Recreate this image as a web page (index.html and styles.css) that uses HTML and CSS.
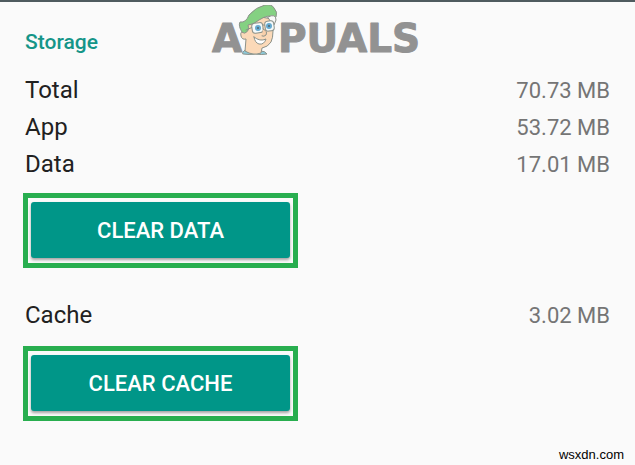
FILE: index.html
```html
<!DOCTYPE html>
<html lang="en">
<head>
    <meta charset="UTF-8">
    <meta name="viewport" content="width=device-width, initial-scale=1.0">
    <title>Storage</title>
    <link rel="stylesheet" href="styles.css">
</head>
<body>
    <svg class="logo" width="210" height="56" viewBox="0 0 210 56" role="img" aria-label="Appuals">
        <text class="logo-text" x="1" y="47">A</text>
        <text class="logo-text" x="67" y="47">PUALS</text>
        <g stroke="#8b9189" stroke-width="1" stroke-linejoin="round" stroke-linecap="round">
            <path fill="#8bcbdc" d="M32 47 Q35 43 38 44 L50 46 Q54 46 56 49 Q50 50 45 49 Q38 50 32 49Z"/>
            <path fill="#fbd9b8" d="M32 27 Q29 26 30 31 Q31 35 35 34 L34 46 Q42 51 50 48 L51 43 Q57 42 60 37 Q62 33 62 26 L61 14 L50 12 L37 19Z"/>
            <path fill="#84d182" d="M31 27 Q27 21 29 17 Q35 18 38 10 Q45 2 54 0 Q61 -1 63 3 Q67 7 65 12 Q57 9 48 15 Q42 20 37 20 Q39 26 34 28Z"/>
            <path fill="#fafafa" d="M57 12 Q65 8 65 15 L63 20 L60 17Z"/>
            <path fill="none" d="M35 25 L42 22 M51 20 L54 20"/>
            <rect x="41" y="18" width="11" height="10" rx="3" fill="#f5fafa" transform="rotate(-8 46 23)"/>
            <rect x="54" y="16" width="9" height="10" rx="3" fill="#f5fafa" transform="rotate(-8 58 21)"/>
            <path fill="#f8cfaa" d="M52 24 Q57 26 55 30 Q53 32 51 31"/>
            <path fill="#ffffff" d="M43 32 Q49 37 55 34 Q53 40 48 39 Q44 38 43 32Z"/>
        </g>
        <circle cx="47" cy="23" r="3" fill="#67abd0"/>
        <circle cx="58" cy="21" r="3" fill="#67abd0"/>
        <circle cx="47" cy="23" r="1" fill="#52636e"/>
        <circle cx="58" cy="21" r="1" fill="#52636e"/>
    </svg>

    <main class="storage">
        <h1>Storage</h1>
        <dl class="sizes">
            <div class="row"><dt>Total</dt><dd>70.73 MB</dd></div>
            <div class="row"><dt>App</dt><dd>53.72 MB</dd></div>
            <div class="row"><dt>Data</dt><dd>17.01 MB</dd></div>
        </dl>
        <div class="highlight">
            <button type="button">CLEAR DATA</button>
        </div>
        <dl class="sizes cache">
            <div class="row"><dt>Cache</dt><dd>3.02 MB</dd></div>
        </dl>
        <div class="highlight">
            <button type="button">CLEAR CACHE</button>
        </div>
    </main>

    <footer>wsxdn.com</footer>
</body>
</html>
```

FILE: styles.css
```css
* {
    box-sizing: border-box;
}
body {
    background-color: #fafafa;
    border-top: 2px solid #4f5b5f;
    color: #212121;
    font-family: Roboto, sans-serif;
    display: flex;
    flex-direction: column;
    min-height: 100vh;
    margin: 0;
}
.logo {
    position: absolute;
    top: 5px;
    left: 50%;
    transform: translateX(-50%);
    margin-left: -2px;
}
.logo-text {
    fill: #929292;
    stroke: #929292;
    stroke-width: 1px;
    stroke-linejoin: round;
    font-family: "DejaVu Sans", sans-serif;
    font-size: 39px;
    font-weight: bold;
}
.storage {
    flex: 1;
    padding: 24px 25px 0;
}
h1 {
    color: #159588;
    font-size: 21px;
    font-weight: 500;
    line-height: 32px;
    margin: 0 0 14px;
}
.sizes {
    margin: 0 0 10px;
}
.cache {
    margin: 29px 0 12px;
}
.row {
    display: flex;
    justify-content: space-between;
    align-items: center;
    line-height: 37px;
}
dt {
    font-size: 24px;
}
dd {
    color: #757575;
    font-size: 22px;
    margin: 0;
}
.highlight {
    border: 5px solid #28ae4f;
    padding: 4px 3px 5px;
    width: 275px;
    margin-left: -2px;
}
button {
    display: block;
    width: 100%;
    height: 56px;
    background-color: #009688;
    color: #ffffff;
    border: none;
    border-radius: 3px;
    box-shadow: 0 2px 3px rgba(0, 0, 0, 0.35);
    font-family: inherit;
    font-size: 22px;
    font-weight: 500;
    cursor: pointer;
}
footer {
    color: #000000;
    font-family: "Liberation Sans", Arial, sans-serif;
    font-size: 13px;
    line-height: 15px;
    text-align: right;
    padding: 0 11px 3px;
}
```
